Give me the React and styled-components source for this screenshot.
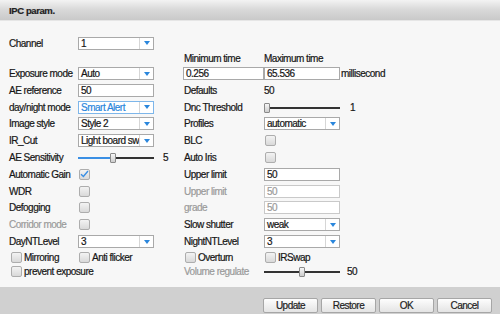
import styled, { createGlobalStyle } from "styled-components";

const GlobalStyle = createGlobalStyle`
  html, body { margin: 0; padding: 0; background: #f7f7f7; }
  body { font-family: "Liberation Sans", Arial, sans-serif; }
`;

const Dialog = styled.div`
  width: 500px;
  height: 314px;
  display: flex;
  flex-direction: column;
  background: #f7f7f7;
  overflow: hidden;
  font-size: 10px;
  letter-spacing: -0.5px;
  color: #161616;
  -webkit-text-stroke: 0.2px;
`;

const TitleBar = styled.div`
  height: 20px;
  flex: none;
  display: flex;
  align-items: center;
  padding-left: 9px;
  background: linear-gradient(#f3f3f3, #dadada 45%, #c9c9c9);
  border-bottom: 1px solid #e6e6e6;
  font-weight: bold;
  font-size: 9.5px;
  letter-spacing: -0.4px;
  color: #222;
`;

const Body = styled.div`
  flex: 1;
  display: flex;
  flex-direction: column;
  gap: 1.8px;
  padding: 14.5px 0 0 9px;
`;

const Row = styled.div`
  display: grid;
  grid-template-columns: 69px 76px 30px 80px 76px 1fr;
  height: ${(p) => p.$h || 15}px;
  align-items: center;
`;

const Label = styled.span`
  grid-column: ${(p) => p.$col || "auto"};
  padding-left: ${(p) => p.$pad || 0}px;
  color: ${(p) => (p.$muted ? "#9a9a9a" : "inherit")};
  white-space: nowrap;
`;

const Box = styled.div`
  grid-column: ${(p) => p.$col || "auto"};
  margin-left: ${(p) => p.$shift || 0}px;
  height: 13px;
  box-sizing: border-box;
  border: 1px solid ${(p) => (p.$active ? "#7db6ea" : p.$muted ? "#c9c9c9" : "#a9a9a9")};
  background: #fff;
  display: flex;
  align-items: center;
  color: ${(p) => (p.$muted ? "#9a9a9a" : "inherit")};
  overflow: hidden;
`;

const BoxText = styled.span`
  flex: 1;
  min-width: 0;
  padding-left: 2px;
  white-space: nowrap;
  color: ${(p) => (p.$active ? "#2a86dc" : "inherit")};
`;

const DropButton = styled.span`
  width: 13px;
  height: 100%;
  flex: none;
  border-left: 1px solid #d6d6d6;
  display: flex;
  align-items: center;
  justify-content: center;
  &::after {
    content: "";
    border-left: 3px solid transparent;
    border-right: 3px solid transparent;
    border-top: 4px solid #2a86dc;
  }
`;

const SliderTrack = styled.div`
  grid-column: ${(p) => p.$col};
  position: relative;
  height: 9px;
  &::before {
    content: "";
    position: absolute;
    left: 0;
    right: 0;
    top: 4px;
    height: 2px;
    background: ${(p) =>
      p.$fill
        ? `linear-gradient(to right, #3a8fe4 ${p.$pos}px, #333 ${p.$pos}px)`
        : "#333"};
  }
`;

const Thumb = styled.span`
  position: absolute;
  top: 0;
  left: ${(p) => p.$pos}px;
  width: 4px;
  height: 8px;
  background: linear-gradient(#f6f6f6, #cdcdcd);
  border: 1px solid #8a8a8a;
  border-radius: 1px;
`;

const CheckCell = styled.div`
  grid-column: ${(p) => p.$col};
  margin-left: ${(p) => p.$shift || 0}px;
  display: flex;
  align-items: center;
  gap: 2px;
  white-space: nowrap;
`;

const CheckSquare = styled.span`
  width: 11px;
  height: 11px;
  flex: none;
  box-sizing: border-box;
  border: 1px solid #adadad;
  border-radius: 2px;
  background: linear-gradient(#f3f3f3, #d9d9d9);
  display: flex;
  align-items: center;
  justify-content: center;
`;

const Footer = styled.div`
  height: 27px;
  flex: none;
  box-sizing: border-box;
  background: #d0d0d0;
  display: flex;
  justify-content: flex-end;
  align-items: flex-start;
  gap: 3px;
  padding: 11px 8px 0 0;
`;

const Button = styled.button`
  width: 55px;
  height: 15px;
  padding: 0;
  font: inherit;
  letter-spacing: inherit;
  color: #222;
  border: 1px solid #a6a6a6;
  border-radius: 2px;
  background: linear-gradient(#fdfdfd, #e4e4e4);
`;

function Select({ col, value, active }) {
  return (
    <Box $col={col} $active={active}>
      <BoxText $active={active}>{value}</BoxText>
      <DropButton />
    </Box>
  );
}

function Field({ col, value, muted, shift }) {
  return (
    <Box $col={col} $muted={muted} $shift={shift}>
      <BoxText>{value}</BoxText>
    </Box>
  );
}

function Slider({ col, pos, fill }) {
  return (
    <SliderTrack $col={col} $pos={pos} $fill={fill}>
      <Thumb $pos={pos} />
    </SliderTrack>
  );
}

function Checkbox({ col, shift, checked, label }) {
  return (
    <CheckCell $col={col} $shift={shift}>
      <CheckSquare>
        {checked && (
          <svg width="9" height="8" viewBox="0 0 9 8">
            <path d="M1 4.2 L3.4 6.5 L8 1" fill="none" stroke="#3a8fe4" strokeWidth="1.4" />
          </svg>
        )}
      </CheckSquare>
      {label && <span>{label}</span>}
    </CheckCell>
  );
}

export default function App() {
  return (
    <Dialog>
      <GlobalStyle />
      <TitleBar>IPC param.</TitleBar>
      <Body>
        <Row>
          <Label $col="1">Channel</Label>
          <Select col="2" value="1" />
        </Row>
        <Row $h={12}>
          <Label $col="4">Minimum time</Label>
          <Label $col="5">Maximum time</Label>
        </Row>
        <Row>
          <Label $col="1">Exposure mode</Label>
          <Select col="2" value="Auto" />
          <Field col="4" value="0.256" shift={-1} />
          <Field col="5" value="65.536" />
          <Label $col="6" $pad={1}>millisecond</Label>
        </Row>
        <Row>
          <Label $col="1">AE reference</Label>
          <Field col="2" value="50" />
          <Label $col="4">Defaults</Label>
          <Label $col="5">50</Label>
        </Row>
        <Row>
          <Label $col="1">day/night mode</Label>
          <Select col="2" value="Smart Alert" active />
          <Label $col="4">Dnc Threshold</Label>
          <Slider col="5" pos={0} />
          <Label $col="6" $pad={10}>1</Label>
        </Row>
        <Row>
          <Label $col="1">Image style</Label>
          <Select col="2" value="Style 2" />
          <Label $col="4">Profiles</Label>
          <Select col="5" value="automatic" />
        </Row>
        <Row>
          <Label $col="1">IR_Cut</Label>
          <Select col="2" value="Light board sw" />
          <Label $col="4">BLC</Label>
          <Checkbox col="5" shift={1} />
        </Row>
        <Row>
          <Label $col="1">AE Sensitivity</Label>
          <Slider col="2" pos={32} fill />
          <Label $col="3" $pad={9}>5</Label>
          <Label $col="4">Auto Iris</Label>
          <Checkbox col="5" shift={1} />
        </Row>
        <Row>
          <Label $col="1">Automatic Gain</Label>
          <Checkbox col="2" shift={1} checked />
          <Label $col="4">Upper limit</Label>
          <Field col="5" value="50" />
        </Row>
        <Row>
          <Label $col="1">WDR</Label>
          <Checkbox col="2" shift={1} />
          <Label $col="4" $muted>Upper limit</Label>
          <Field col="5" value="50" muted />
        </Row>
        <Row>
          <Label $col="1">Defogging</Label>
          <Checkbox col="2" shift={1} />
          <Label $col="4" $muted>grade</Label>
          <Field col="5" value="50" muted />
        </Row>
        <Row>
          <Label $col="1" $muted>Corridor mode</Label>
          <Checkbox col="2" shift={1} />
          <Label $col="4">Slow shutter</Label>
          <Select col="5" value="weak" />
        </Row>
        <Row>
          <Label $col="1">DayNTLevel</Label>
          <Select col="2" value="3" />
          <Label $col="4">NightNTLevel</Label>
          <Select col="5" value="3" />
        </Row>
        <Row $h={13}>
          <Checkbox col="1" shift={2} label="Mirroring" />
          <Checkbox col="2" shift={1} label="Anti flicker" />
          <Checkbox col="4" shift={1} label="Overturn" />
          <Checkbox col="5" shift={1} label="IRSwap" />
        </Row>
        <Row $h={12}>
          <Checkbox col="1 / span 2" shift={2} label="prevent exposure" />
          <Label $col="4" $muted>Volume regulate</Label>
          <Slider col="5" pos={35} />
          <Label $col="6" $pad={7}>50</Label>
        </Row>
      </Body>
      <Footer>
        <Button>Update</Button>
        <Button>Restore</Button>
        <Button>OK</Button>
        <Button>Cancel</Button>
      </Footer>
    </Dialog>
  );
}
